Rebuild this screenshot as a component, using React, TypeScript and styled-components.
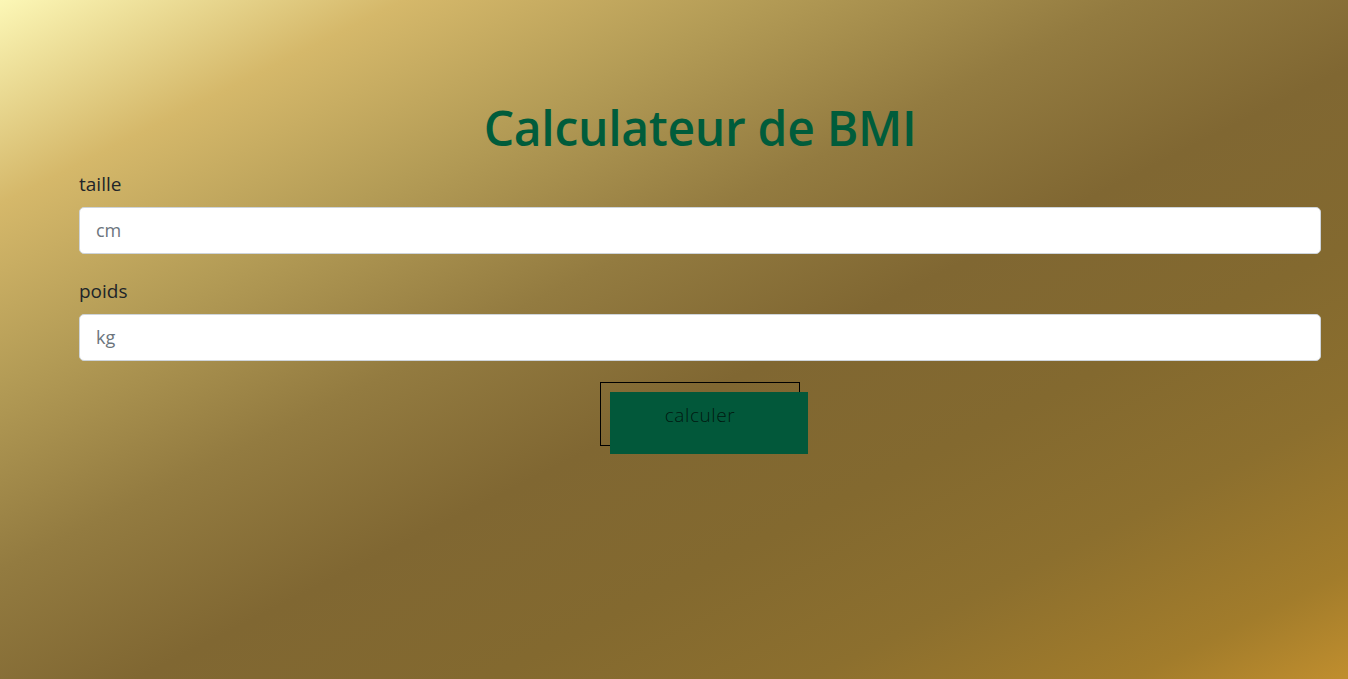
import React from "react";
import styled, { createGlobalStyle } from "styled-components";

const GlobalStyle = createGlobalStyle`
  html, body {
    margin: 0;
    padding: 0;
  }
  body {
    font-family: "Open Sans", "Noto Sans", sans-serif;
    color: #212529;
  }
  * { box-sizing: border-box; }
`;

const Page = styled.div`
  min-height: 100vh;
  background: linear-gradient(
    to bottom right,
    #fcf7b6 0%,
    #d5b86a 15%,
    #b49c56 28%,
    #937b40 42%,
    #806732 55%,
    #83692f 68%,
    #8c6f2e 80%,
    #a27c2b 92%,
    #c08e2e 100%
  );
  padding: 99px 27px 40px 79px;
`;

const Title = styled.h1`
  margin: 0 0 12px;
  font-size: 48px;
  line-height: 1.2;
  font-weight: 600;
  letter-spacing: -0.3px;
  text-align: center;
  color: #005c3b;
`;

const Field = styled.div<{ $gap: number }>`
  display: flex;
  flex-direction: column;
  margin-bottom: ${(p) => p.$gap}px;
`;

const Label = styled.label`
  font-size: 19px;
  line-height: 30px;
  margin-bottom: 8px;
  color: #212529;
`;

const Input = styled.input`
  width: 100%;
  height: 47px;
  border: 1px solid #ced4da;
  border-radius: 5px;
  background: #fff;
  padding: 0 16px;
  font-family: "Open Sans", "Noto Sans", sans-serif;
  font-size: 18px;
  color: #212529;
  outline: none;
  &::placeholder {
    color: #6c757d;
  }
`;

const Button = styled.button`
  position: relative;
  isolation: isolate;
  display: block;
  margin: 0 auto;
  width: 200px;
  height: 64px;
  border: 1px solid #000;
  background: transparent;
  font-family: "Open Sans", "Noto Sans", sans-serif;
  font-size: 19px;
  font-weight: 300;
  letter-spacing: 0.6px;
  color: rgba(0, 0, 0, 0.72);
  padding: 0;
  cursor: pointer;
  &::before {
    content: "";
    position: absolute;
    left: 9px;
    top: 9px;
    width: 198px;
    height: 62px;
    background: #02583a;
    z-index: -1;
  }
`;

const ButtonText = styled.span`
  display: block;
  transform: translateY(1px);
`;

export default function App() {
  return (
    <>
      <GlobalStyle />
      <Page>
        <Title>Calculateur de BMI</Title>
        <Field $gap={22}>
          <Label htmlFor="taille">taille</Label>
          <Input id="taille" type="text" placeholder="cm" />
        </Field>
        <Field $gap={21}>
          <Label htmlFor="poids">poids</Label>
          <Input id="poids" type="text" placeholder="kg" />
        </Field>
        <Button type="button">
          <ButtonText>calculer</ButtonText>
        </Button>
      </Page>
    </>
  );
}
